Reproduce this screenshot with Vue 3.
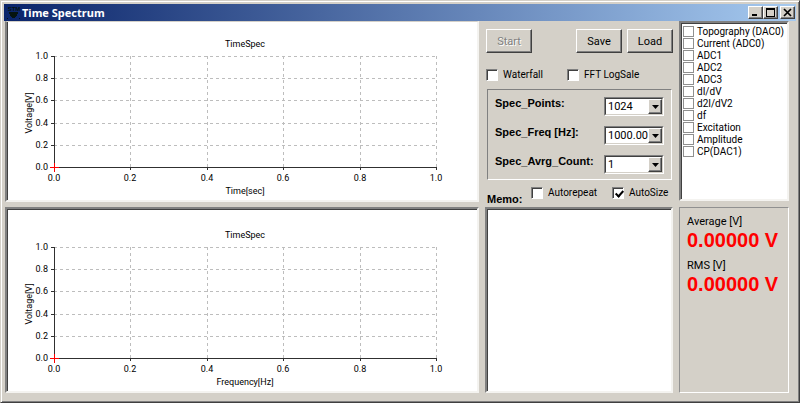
<script setup>
import { ref } from 'vue'

const steps = [0, 1, 2, 3, 4, 5]
const charts = [
  { id: 'time', title: 'TimeSpec', xLabel: 'Time[sec]', top: 34, height: 178 },
  { id: 'freq', title: 'TimeSpec', xLabel: 'Frequency[Hz]', top: 38, height: 182 }
]
const left = 47
const plotWidth = 382
const plotHeight = 111
const tickX = (i) => Math.round(left + (plotWidth * i) / 5)
const tickY = (chart, i) => Math.round(chart.top + plotHeight - (plotHeight * i) / 5)
const tickText = (i) => (i / 5).toFixed(1)

const waterfall = ref(false)
const logScale = ref(false)
const autorepeat = ref(false)
const autoSize = ref(true)
const memo = ref('')

const settings = ref([
  { id: 'points', label: 'Spec_Points:', value: '1024', options: ['512', '1024', '2048'] },
  { id: 'freq', label: 'Spec_Freq [Hz]:', value: '1000.00', options: ['500.00', '1000.00', '2000.00'] },
  { id: 'count', label: 'Spec_Avrg_Count:', value: '1', options: ['1', '2', '4'] }
])

const channels = ref(
  ['Topography (DAC0)', 'Current (ADC0)', 'ADC1', 'ADC2', 'ADC3', 'dI/dV', 'd2I/dV2', 'df', 'Excitation', 'Amplitude', 'CP(DAC1)'].map(
    (name) => ({ name, on: false })
  )
)

const readings = [
  { label: 'Average [V]', value: '0.00000 V' },
  { label: 'RMS [V]', value: '0.00000 V' }
]
</script>

<template>
  <main class="window">
    <header class="titlebar">
      <svg class="logo" width="14" height="14" viewBox="0 0 14 14" aria-hidden="true">
        <text x="7" y="5" text-anchor="middle">STM</text>
        <path d="M2 6h9v2h-1v2H9v1H8v1H5v-1H4v-1H3V8H2zM0 12h1v1H0zM12 12h1v1h-1z" fill="#06140f" />
      </svg>
      <h1>Time Spectrum</h1>
      <div class="controls">
        <button type="button" class="raised" aria-label="Minimize">
          <svg width="11" height="9" viewBox="0 0 11 9"><path d="M2 6h5v2H2z" /></svg>
        </button>
        <button type="button" class="raised" aria-label="Maximize">
          <svg width="11" height="9" viewBox="0 0 11 9"><path d="M1 0h9v9H1zM2 2v6h7V2z" fill-rule="evenodd" /></svg>
        </button>
        <button type="button" class="raised close" aria-label="Close">
          <svg width="11" height="9" viewBox="0 0 11 9"><path d="M2 1l7 7M9 1L2 8" stroke="#000" stroke-width="1.7" /></svg>
        </button>
      </div>
    </header>

    <div class="body">
      <div class="column charts">
        <section v-for="chart in charts" :key="chart.id" class="chart" :class="chart.id">
          <svg :viewBox="`0 0 470 ${chart.height}`" role="img" :aria-label="chart.xLabel">
            <text :x="left + 191" :y="chart.top - 9" text-anchor="middle">{{ chart.title }}</text>
            <g class="grid">
              <path v-for="i in 5" :key="'h' + i" :d="`M${left} ${tickY(chart, i) + 0.5}H${left + plotWidth}`" />
              <path v-for="i in 5" :key="'v' + i" :d="`M${tickX(i) + 0.5} ${chart.top + plotHeight}V${chart.top}`" />
            </g>
            <g class="axis">
              <path :d="`M${left + 0.5} ${chart.top}V${chart.top + plotHeight + 0.5}H${left + plotWidth + 1}`" />
              <path v-for="i in steps" :key="'x' + i" :d="`M${tickX(i) + 0.5} ${chart.top + plotHeight}v3`" />
              <path v-for="i in steps" :key="'y' + i" :d="`M${left - 3} ${tickY(chart, i) + 0.5}h3`" />
            </g>
            <path
              class="cursor"
              :d="`M${left - 4} ${chart.top + plotHeight + 0.5}h9M${left + 0.5} ${chart.top + plotHeight - 4}v9`"
            />
            <g>
              <text v-for="i in steps" :key="i" :x="tickX(i)" :y="chart.top + plotHeight + 14" text-anchor="middle">{{ tickText(i) }}</text>
            </g>
            <g>
              <text v-for="i in steps" :key="i" :x="left - 6" :y="tickY(chart, i) + 3" text-anchor="end">{{ tickText(i) }}</text>
            </g>
            <text :x="left + 191" :y="chart.top + 138" text-anchor="middle">{{ chart.xLabel }}</text>
            <text :transform="`translate(25 ${chart.top + 57}) rotate(-90)`" text-anchor="middle">Voltage[V]</text>
          </svg>
        </section>
      </div>

      <div class="column middle">
        <section class="panel">
          <div class="buttons">
            <button type="button" class="raised" disabled>Start</button>
            <button type="button" class="raised save">Save</button>
            <button type="button" class="raised">Load</button>
          </div>
          <div class="checks">
            <label><input v-model="waterfall" type="checkbox" />Waterfall</label>
            <label><input v-model="logScale" type="checkbox" />FFT LogSale</label>
          </div>
          <div class="settings">
            <div v-for="s in settings" :key="s.id" class="setting">
              <label :for="s.id">{{ s.label }}</label>
              <div class="combo">
                <select :id="s.id" v-model="s.value">
                  <option v-for="o in s.options" :key="o">{{ o }}</option>
                </select>
                <span class="arrow raised" aria-hidden="true">
                  <svg width="7" height="4" viewBox="0 0 7 4"><path d="M0 0h7L3.500 4z" /></svg>
                </span>
              </div>
            </div>
          </div>
          <div class="memo-row">
            <label class="memo-label" for="memo">Memo:</label>
            <label class="repeat"><input v-model="autorepeat" type="checkbox" />Autorepeat</label>
            <label><input v-model="autoSize" type="checkbox" />AutoSize</label>
          </div>
        </section>
        <textarea id="memo" v-model="memo" class="memo"></textarea>
      </div>

      <div class="column side">
        <section class="channels">
          <label v-for="c in channels" :key="c.name"><input v-model="c.on" type="checkbox" />{{ c.name }}</label>
        </section>
        <section class="readings">
          <div v-for="r in readings" :key="r.label" class="reading">
            <div>{{ r.label }}</div>
            <strong>{{ r.value }}</strong>
          </div>
        </section>
      </div>
    </div>
  </main>
</template>

<style>
body {
  background: #d4d0c8;
}
</style>

<style scoped>
* {
  box-sizing: border-box;
}
.window {
  min-height: 100vh;
  padding: 3px 3px 8px;
  border: 1px solid;
  border-color: #d4d0c8 #404040 #404040 #d4d0c8;
  box-shadow: inset 1px 1px #fff, inset -1px -1px #808080;
  background: #d4d0c8;
  color: #000;
  font: 11px/13px Roboto, "Liberation Sans", sans-serif;
}
button,
select,
textarea {
  font: inherit;
  color: inherit;
}
.raised {
  background: #d4d0c8;
  border: 1px solid;
  border-color: #fff #404040 #404040 #fff;
  box-shadow: inset -1px -1px #808080;
}
.titlebar {
  display: flex;
  align-items: center;
  height: 17px;
  padding: 0 1px 0 3px;
  background: linear-gradient(90deg, #0a246a, #a6caf0);
}
.logo text {
  font: bold 6px "Liberation Sans", Arial, sans-serif;
  fill: #06140f;
}
h1 {
  flex: 1;
  margin: 0 0 0 1px;
  color: #fff;
  font: bold 11px/16px "Noto Sans", sans-serif;
}
.controls {
  display: flex;
}
.controls button {
  display: grid;
  place-items: center;
  width: 15px;
  height: 13px;
  padding: 0;
}
.controls .close {
  margin-left: 2px;
}
.body {
  display: grid;
  grid-template-columns: minmax(0, 1fr) 188px 110px;
  column-gap: 6px;
  padding: 0 7px 0 1px;
}
.column {
  display: flex;
  flex-direction: column;
}
.charts {
  gap: 5px;
}
.middle {
  gap: 1px;
}
.side {
  gap: 6px;
}
.chart,
.memo,
.channels {
  border: 2px solid;
  border-color: #808080 #f4f3f0 #f4f3f0 #808080;
  box-shadow: inset 1px 1px #404040;
  background: #fff;
}
.chart.time {
  border-top-width: 1px;
  border-top-color: #d4d0c8;
  box-shadow: inset 1px 0 #404040;
}
.chart svg {
  display: block;
  width: 100%;
}
.chart text {
  font-size: 9px;
  fill: #000;
}
.chart path {
  fill: none;
}
.grid {
  stroke: #bdbdbd;
  stroke-dasharray: 3 3;
}
.axis {
  stroke: #303030;
}
.chart .cursor {
  stroke: #f00;
}
.panel {
  padding: 8px 0 0 1px;
}
.buttons {
  display: flex;
  gap: 5px;
}
.buttons button {
  width: 46px;
  height: 24px;
  padding: 0;
}
.buttons button:disabled {
  color: #808080;
  text-shadow: 1px 1px #fff;
}
.save {
  margin-left: auto;
}
.checks label,
.memo-row label,
.channels label {
  display: flex;
  align-items: center;
  font-size: 10px;
  white-space: nowrap;
}
input {
  appearance: none;
  flex: none;
  width: 12px;
  height: 12px;
  margin: 0 5px 0 0;
  border: 1px solid;
  border-color: #808080 #fff #fff #808080;
  box-shadow: inset 1px 1px #404040;
  background: #fff;
}
input:checked::before {
  content: "";
  display: block;
  width: 3px;
  height: 6px;
  margin: 1px 0 0 4px;
  border: solid #000;
  border-width: 0 2px 2px 0;
  transform: rotate(42deg);
}
.checks {
  display: grid;
  grid-template-columns: 81px 1fr;
  margin-top: 15px;
}
.settings {
  display: grid;
  gap: 10px;
  margin: 8px 1px 0 1px;
  padding: 7px 7px 5px 7px;
  border: 1px solid;
  border-color: #808080 #fff #fff #808080;
}
.setting {
  display: flex;
  justify-content: space-between;
  align-items: flex-start;
}
.setting label,
.memo-row .memo-label {
  font: bold 11px/13px "Liberation Sans", Arial, sans-serif;
}
.combo {
  display: grid;
  grid-template-columns: 1fr 15px;
  width: 60px;
  height: 19px;
  border: 1px solid;
  border-color: #808080 #fff #fff #808080;
}
.combo select {
  grid-area: 1 / 1 / 2 / 3;
  appearance: none;
  width: 100%;
  padding: 0 0 0 2px;
  border: 1px solid;
  border-color: #404040 #d4d0c8 #d4d0c8 #404040;
  border-radius: 0;
  background: #fff;
}
.arrow {
  grid-area: 1 / 2;
  z-index: 1;
  display: grid;
  place-items: center;
  margin: 1px 1px 1px 0;
  pointer-events: none;
}
.memo-row {
  display: flex;
  align-items: flex-start;
  height: 20px;
  margin-top: 6px;
}
.memo-row .memo-label {
  align-self: flex-end;
  width: 45px;
  padding-left: 1px;
}
.memo-row .repeat {
  width: 81px;
}
.memo {
  flex: 1;
  width: 100%;
  margin: 0;
  border-radius: 0;
  resize: none;
}
.channels {
  flex: 0 0 180px;
  padding: 2px 0 0 2px;
}
.channels label {
  height: 12px;
}
.channels input {
  width: 11px;
  height: 11px;
  margin-right: 3px;
  border-color: #909090;
  box-shadow: none;
}
.readings {
  flex: 1;
  padding: 7px 0 0 7px;
  border: 1px solid;
  border-color: #909090 #fff #fff #909090;
}
.reading {
  margin-bottom: 6px;
}
.reading strong {
  display: block;
  color: #f00;
  font: bold 20px/25px "Liberation Sans", Arial, sans-serif;
  white-space: nowrap;
}
</style>
